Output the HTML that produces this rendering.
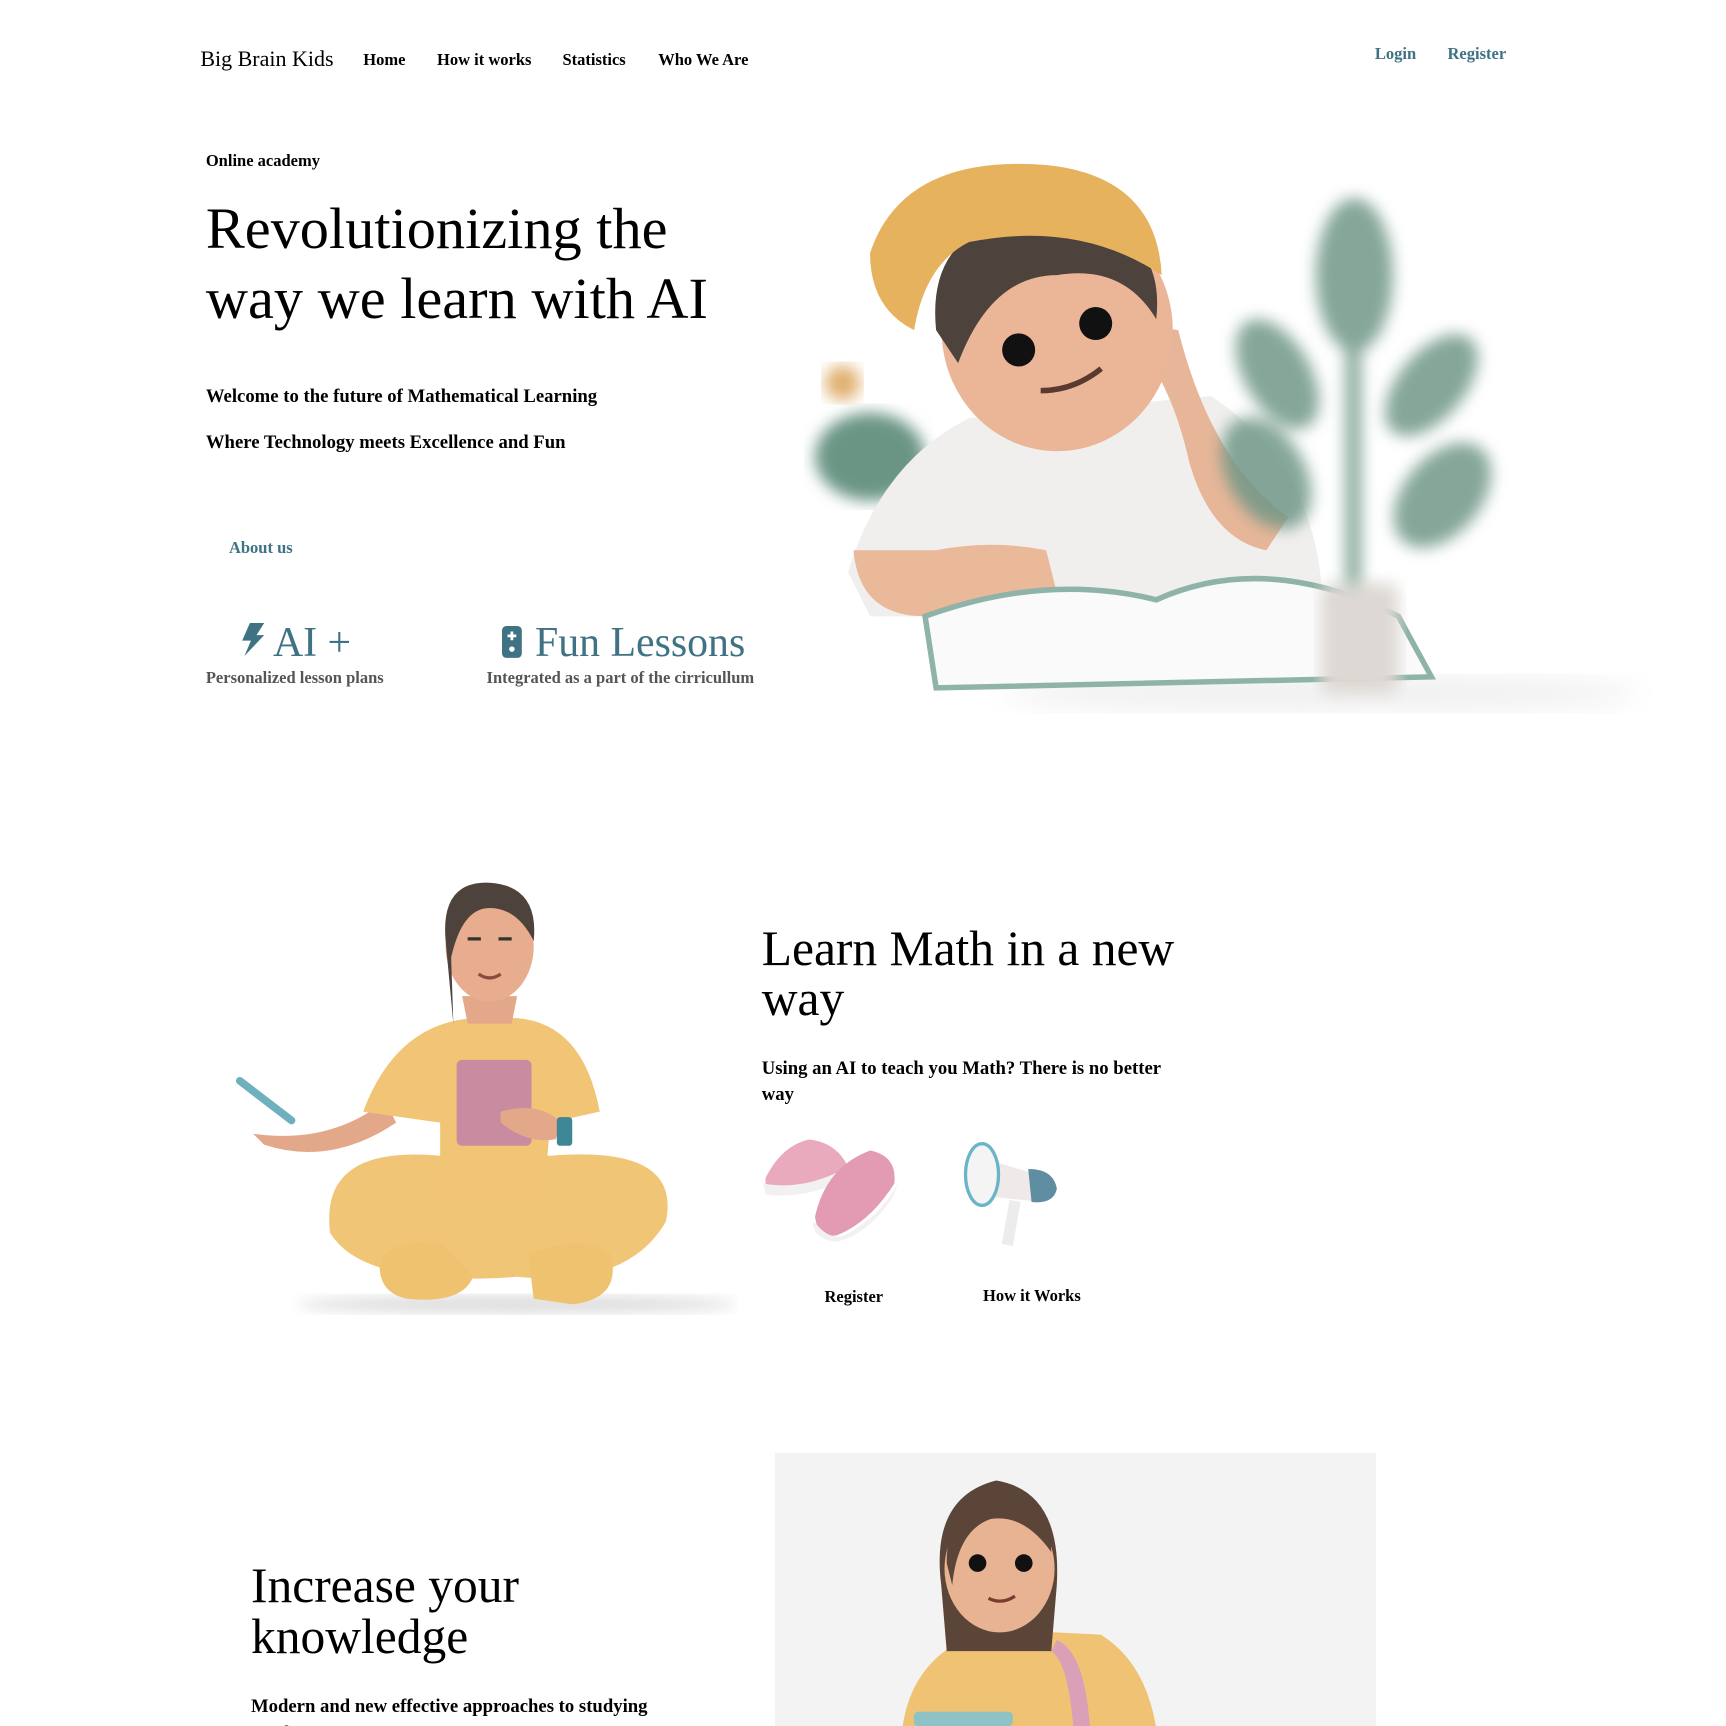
<!DOCTYPE html>
<html><head><meta charset="utf-8">
<style>
html,body{margin:0;padding:0;background:#fff;overflow:hidden;width:1726px;height:1726px}
#w{position:relative;width:1568px;height:1568px;zoom:1.10077;font-family:"Liberation Serif",serif;color:#000}
.a{position:absolute;white-space:nowrap}
.b{font-weight:bold}
.t{color:#3f7384}
svg{position:absolute}
</style></head><body><div id="w">
<div class="a" style="left:182px;top:42px;font-size:20px">Big Brain Kids</div>
<div class="a b" style="left:330px;top:45px;font-size:15px">Home</div>
<div class="a b" style="left:397px;top:45px;font-size:15px">How it works</div>
<div class="a b" style="left:511px;top:45px;font-size:15px">Statistics</div>
<div class="a b" style="left:598px;top:45px;font-size:15px">Who We Are</div>
<div class="a b t" style="left:1249px;top:40px;font-size:15px">Login</div>
<div class="a b t" style="left:1315px;top:40px;font-size:15px">Register</div>

<div class="a b" style="left:187px;top:137px;font-size:15px">Online academy</div>
<div class="a" style="left:187px;top:176px;font-size:53px;line-height:64px">Revolutionizing the<br>way we learn with AI</div>
<div class="a b" style="left:187px;top:351px;font-size:17px">Welcome to the future of Mathematical Learning</div>
<div class="a b" style="left:187px;top:392px;font-size:17px">Where Technology meets Excellence and Fun</div>
<div class="a b t" style="left:208px;top:489px;font-size:15px">About us</div>

<svg style="left:218px;top:566px" width="24" height="30" viewBox="0 0 24 30"><path d="M9 0h13L15 11h7L4 30l6-14H2z" fill="#3f7384"/></svg>
<div class="a t" style="left:248px;top:562px;font-size:38px">AI +</div>
<div class="a b" style="left:187px;top:607px;font-size:15px;color:#555">Personalized lesson plans</div>
<svg style="left:456px;top:569px" width="18" height="29" viewBox="0 0 18 29"><rect x="0" y="0" width="18" height="29" rx="4" fill="#3f7384"/><path d="M9 5v8M5 9h8" stroke="#fff" stroke-width="2.5"/><circle cx="9" cy="21" r="2.5" fill="#fff"/></svg>
<div class="a t" style="left:486px;top:562px;font-size:38px">Fun Lessons</div>
<div class="a b" style="left:442px;top:607px;font-size:15px;color:#555">Integrated as a part of the cirricullum</div>

<svg style="left:730px;top:140px" width="780" height="520" viewBox="730 140 780 520">
<defs><filter id="bl"><feGaussianBlur stdDeviation="7"/></filter><filter id="bl2"><feGaussianBlur stdDeviation="12"/></filter></defs>
<ellipse cx="1200" cy="630" rx="290" ry="15" fill="#eee" filter="url(#bl2)"/>
<circle cx="765" cy="348" r="16" fill="#e0b070" filter="url(#bl)"/>
<ellipse cx="790" cy="415" rx="50" ry="40" fill="#6b9585" filter="url(#bl)"/>
<path d="M770 520 Q800 420 880 380 L1100 360 Q1190 420 1200 530 L1200 560 L790 560 Z" fill="#f1efee"/>
<path d="M775 500 Q780 560 840 560 L960 540 L950 500 Q900 490 850 500 Z" fill="#e9b99a"/>
<path d="M1010 290 Q1060 330 1080 420 Q1100 490 1150 500 L1170 470 Q1100 420 1070 300 Z" fill="#e7b698"/>
<ellipse cx="960" cy="300" rx="105" ry="110" fill="#eab697"/>
<path d="M850 300 Q840 200 950 195 Q1060 200 1050 290 Q1020 240 960 250 Q900 250 870 330 Z" fill="#4e433c"/>
<path d="M790 230 Q820 140 950 150 Q1050 160 1055 250 Q980 200 880 220 Q840 240 830 300 Q790 280 790 230 Z" fill="#e6b25e"/>
<circle cx="925" cy="318" r="15" fill="#111"/><circle cx="995" cy="294" r="15" fill="#111"/>
<path d="M945 355 Q975 355 1000 335" stroke="#5a3a30" stroke-width="5" fill="none"/>
<path d="M840 560 L850 625 L1300 615 L1270 560 Q1150 500 1050 545 Q950 520 840 560 Z" fill="#fafafa" stroke="#8fb3a8" stroke-width="5"/>
<g filter="url(#bl)" fill="#6f9787" opacity=".85">
<ellipse cx="1230" cy="250" rx="35" ry="70"/><ellipse cx="1160" cy="340" rx="30" ry="55" transform="rotate(-30 1160 340)"/>
<ellipse cx="1300" cy="350" rx="30" ry="55" transform="rotate(40 1300 350)"/><ellipse cx="1150" cy="430" rx="35" ry="55" transform="rotate(-30 1150 430)"/>
<ellipse cx="1310" cy="450" rx="35" ry="55" transform="rotate(40 1310 450)"/><rect x="1222" y="260" width="14" height="300"/>
</g>
<rect x="1200" y="530" width="70" height="100" rx="10" fill="#ddd8d3" filter="url(#bl)"/>
</svg>

<svg style="left:210px;top:795px" width="460" height="410" viewBox="210 795 460 410">
<defs><filter id="sh"><feGaussianBlur stdDeviation="6"/></filter></defs>
<ellipse cx="470" cy="1185" rx="200" ry="8" fill="#ddd" filter="url(#sh)"/>
<path d="M230 1030 Q300 1040 350 1000 L360 1020 Q300 1060 240 1040 Z" fill="#e3a88a"/>
<path d="M218 982 L265 1018" stroke="#6fb0bd" stroke-width="7" stroke-linecap="round"/>
<path d="M300 1120 Q290 1040 400 1050 L500 1050 Q620 1040 605 1110 Q570 1170 470 1160 Q330 1170 300 1120 Z" fill="#f0c576"/>
<path d="M345 1150 Q350 1125 400 1130 L430 1160 Q420 1185 370 1180 Q345 1175 345 1150 Z" fill="#efc270"/>
<path d="M480 1140 Q530 1120 555 1140 Q565 1180 520 1185 L485 1180 Z" fill="#efc270"/>
<path d="M330 1010 Q360 930 430 925 L470 925 Q530 930 545 1010 L500 1020 L495 1080 L400 1085 L400 1020 Z" fill="#f1c476"/>
<rect x="415" y="963" width="68" height="78" rx="5" fill="#c98ba0"/>
<path d="M455 1010 Q490 1000 510 1020 L505 1035 Q480 1040 455 1020 Z" fill="#e3a88a"/>
<rect x="506" y="1015" width="14" height="26" rx="3" fill="#3f8795"/>
<path d="M420 905 L470 905 L465 930 L425 930 Z" fill="#e3a88a"/>
<ellipse cx="445" cy="860" rx="40" ry="50" fill="#e8ad8e"/>
<path d="M405 855 Q400 800 445 802 Q490 805 485 855 Q470 825 445 825 Q420 825 410 870 L412 930 Z" fill="#4e433c"/>
<path d="M425 853 h12 M453 853 h12" stroke="#333" stroke-width="3"/>
<path d="M435 885 Q445 892 455 885" stroke="#8a4a40" stroke-width="3" fill="none"/>
</svg>

<div class="a" style="left:692px;top:839px;font-size:45px;line-height:46px">Learn Math in a new<br>way</div>
<div class="a b" style="left:692px;top:959px;font-size:17px;line-height:24px">Using an AI to teach you Math? There is no better<br>way</div>

<svg style="left:690px;top:1030px" width="130" height="100" viewBox="0 0 130 100">
<path d="M5 40 Q20 10 45 5 Q70 8 80 30 L60 45 Q30 55 5 50 Z" fill="#e9aabd"/>
<path d="M3 45 Q40 52 80 30 L82 40 Q40 60 5 55 Z" fill="#f2f0f0"/>
<path d="M50 75 Q60 30 100 15 Q125 20 122 45 Q100 80 70 92 Q52 95 50 75 Z" fill="#e39ab3"/>
<path d="M50 80 Q60 95 75 93 Q110 75 125 45 L122 55 Q100 90 70 98 Q50 96 48 82 Z" fill="#f2f0f0"/>
</svg>
<svg style="left:872px;top:1032px" width="95" height="105" viewBox="0 0 95 105">
<path d="M20 20 L70 35 L75 60 L25 55 Z" fill="#efe9ea"/>
<path d="M62 30 Q85 30 88 48 Q85 62 65 60 Z" fill="#5f8ea3"/>
<ellipse cx="20" cy="35" rx="15" ry="28" fill="#f4f4f4" stroke="#6ab4c8" stroke-width="3"/>
<path d="M45 58 L55 60 L48 100 L38 98 Z" fill="#ececec"/>
</svg>
<div class="a b" style="left:749px;top:1169px;font-size:15px">Register</div>
<div class="a b" style="left:893px;top:1168px;font-size:15px">How it Works</div>

<div class="a" style="left:704px;top:1320px;width:546px;height:248px;background:#f3f3f3;overflow:hidden">
<svg style="left:0;top:0" width="546" height="248" viewBox="704 1320 546 248">
<path d="M820 1568 Q830 1500 900 1480 L1000 1485 Q1040 1510 1050 1568 Z" fill="#f0c374"/>
<path d="M960 1490 Q985 1500 990 1568 L975 1568 Q970 1510 955 1500 Z" fill="#d9a0b8"/>
<rect x="830" y="1555" width="90" height="13" rx="4" fill="#8fc2c5"/>
<path d="M855 1440 Q845 1360 905 1345 Q965 1355 960 1440 L955 1500 L860 1500 Z" fill="#5a4538"/>
<ellipse cx="908" cy="1425" rx="50" ry="58" fill="#e8b393"/>
<path d="M860 1420 Q860 1360 908 1358 Q955 1362 955 1410 Q930 1375 900 1380 Q870 1390 865 1440 Z" fill="#5a4538"/>
<circle cx="888" cy="1420" r="8" fill="#111"/><circle cx="930" cy="1420" r="8" fill="#111"/>
<path d="M898 1452 Q910 1458 922 1450" stroke="#7a3a30" stroke-width="3" fill="none"/>
</svg></div>
<div class="a" style="left:228px;top:1418px;font-size:45px;line-height:46px">Increase your<br>knowledge</div>
<div class="a b" style="left:228px;top:1539px;font-size:17px;line-height:24px">Modern and new effective approaches to studying<br>Math</div>
</div></body></html>
